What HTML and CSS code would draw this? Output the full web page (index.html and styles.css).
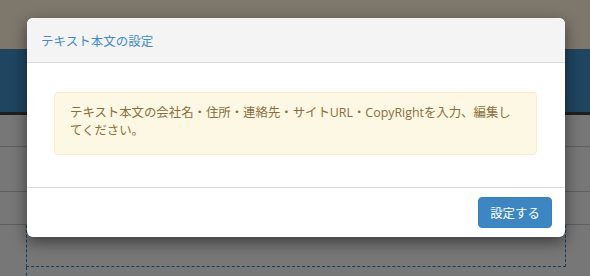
FILE: index.html
```html
<!DOCTYPE html>
<html lang="ja">
<head>
    <meta charset="UTF-8">
    <title>テキスト本文の設定</title>
    <link rel="stylesheet" href="styles.css">
</head>
<body>

    <div class="page">
        <div class="topbar"></div>
        <div class="navbar"></div>
        <div class="rows">
            <div class="row row-a"></div>
            <div class="row row-b"></div>
            <div class="row row-c"></div>
            <div class="drop-box"></div>
            <div class="drop-next"></div>
        </div>
    </div>

    <div class="modal">
        <div class="modal-header">
            <h4 class="modal-title">テキスト本文の設定</h4>
        </div>
        <div class="modal-body">
            <div class="alert">テキスト本文の会社名・住所・連絡先・サイトURL・CopyRightを入力、編集してください。</div>
        </div>
        <div class="modal-footer">
            <button type="button" class="btn-primary">設定する</button>
        </div>
    </div>

</body>
</html>
```

FILE: styles.css
```css
body {
    margin: 0;
    font-family: "Open Sans", "Noto Sans CJK JP", sans-serif;
    background-color: #777;
    overflow: hidden;
}
.page {
    width: 590px;
    height: 276px;
}
.topbar {
    height: 49px;
    background-color: #7e776c;
}
.navbar {
    height: 63px;
    background-color: #1f4560;
    border-bottom: 3px solid #1e1f20;
}
.rows {
    background-color: #777;
}
.row {
    border-bottom: 1px solid #5f5f5f;
}
.row-a {
    height: 31px;
}
.row-b {
    height: 44px;
}
.row-c {
    height: 32px;
}
.drop-box {
    margin: 0 24px 0 26px;
    height: 41px;
    border: 1px dashed #123f5c;
    border-top: none;
}
.drop-next {
    margin-left: 26px;
    height: 20px;
    border-left: 1px dashed #123f5c;
}

/* modal */
.modal {
    position: absolute;
    left: 27px;
    top: 18px;
    width: 538px;
    background-color: #fff;
    border-radius: 6px;
    box-shadow: 0 5px 15px rgba(0, 0, 0, 0.5);
    overflow: hidden;
}
.modal-header {
    height: 44px;
    padding: 0 14px;
    display: flex;
    align-items: center;
    background-color: #f4f4f4;
    border-bottom: 1px solid #dcdcdc;
}
.modal-title {
    margin: 0;
    font-size: 12.5px;
    font-weight: normal;
    color: #428bca;
}
.modal-body {
    padding: 29px 28px 32px 27px;
    border-bottom: 1px solid #dcdcdc;
}
.alert {
    padding: 11px 15px 14px 15px;
    font-size: 12.4px;
    line-height: 18px;
    color: #8a6d3b;
    background-color: #fcf8e3;
    border: 1px solid #faebcc;
    border-radius: 4px;
}
.modal-footer {
    height: 49px;
    padding: 0 13px;
    display: flex;
    align-items: center;
    justify-content: flex-end;
}
.btn-primary {
    width: 74px;
    height: 31px;
    padding: 0;
    font-family: inherit;
    font-size: 12.4px;
    color: #fff;
    background-color: #3c87c3;
    border: 1px solid #3a80b9;
    border-radius: 4px;
}
```
